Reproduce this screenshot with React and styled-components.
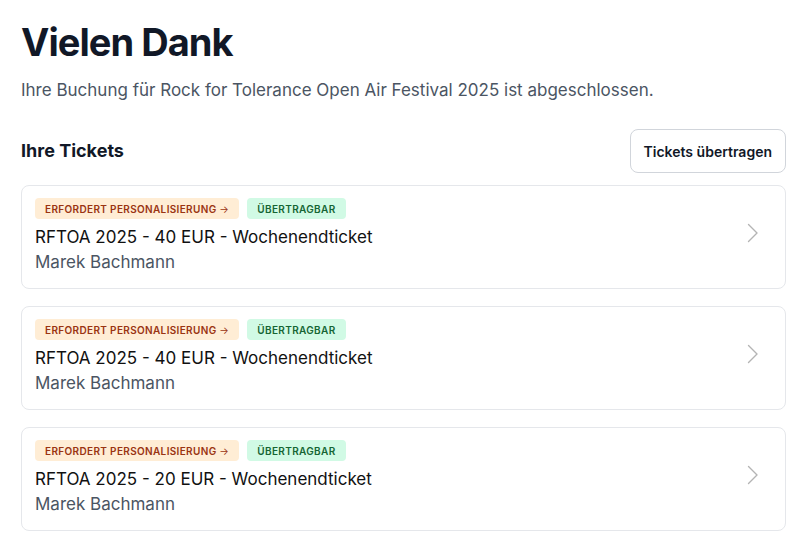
import React from "react";
import styled, { createGlobalStyle } from "styled-components";

const Global = createGlobalStyle`
  html, body { margin: 0; padding: 0; background: #ffffff; }
  body { font-family: Inter, "Noto Sans", sans-serif; -webkit-font-smoothing: antialiased; }
  * { box-sizing: border-box; }
`;

const Page = styled.main`
  padding: 19px 11px 20px 21px;
  display: flex;
  flex-direction: column;
`;

const Title = styled.h1`
  margin: 0;
  font-size: 38px;
  line-height: 46px;
  font-weight: 700;
  color: #111827;
  letter-spacing: -0.025em;
`;

const Subtitle = styled.p`
  margin: 13px 0 0;
  font-size: 17px;
  line-height: 25px;
  color: #4b5563;
`;

const SectionHeader = styled.div`
  margin-top: 26px;
  display: flex;
  align-items: center;
  justify-content: space-between;
`;

const SectionTitle = styled.h2`
  margin: 0;
  font-size: 18px;
  line-height: 28px;
  font-weight: 700;
  color: #111827;
`;

const OutlineButton = styled.button`
  font-family: inherit;
  font-size: 14px;
  font-weight: 600;
  color: #111827;
  background: #ffffff;
  border: 1px solid #d1d5db;
  border-radius: 8px;
  height: 44px;
  padding: 0 13px;
  cursor: pointer;
`;

const List = styled.div`
  margin-top: 12px;
  display: flex;
  flex-direction: column;
  gap: 17px;
`;

const Card = styled.div`
  display: flex;
  align-items: center;
  justify-content: space-between;
  border: 1px solid #e5e7eb;
  border-radius: 8px;
  padding: 12px 26px 12px 13px;
  height: 104px;
`;

const CardBody = styled.div`
  display: flex;
  flex-direction: column;
  align-self: flex-start;
`;

const Badges = styled.div`
  display: flex;
  gap: 8px;
`;

const Badge = styled.span`
  display: inline-flex;
  align-items: center;
  white-space: pre;
  height: 21px;
  padding: 0 10px;
  border-radius: 4px;
  font-size: 10px;
  line-height: 14px;
  font-weight: 600;
  letter-spacing: 0.35px;
  text-transform: uppercase;
  background: ${(p) => (p.$tone === "warn" ? "#ffedd5" : "#d1fae5")};
  color: ${(p) => (p.$tone === "warn" ? "#9a3412" : "#166534")};
`;

const Arrow = styled.span`
  font-weight: 400;
`;

const TicketName = styled.div`
  margin-top: 6px;
  font-size: 17px;
  line-height: 25px;
  color: #111111;
`;

const Holder = styled.div`
  font-size: 17px;
  line-height: 25px;
  color: #4b5563;
`;

const ChevronWrap = styled.span`
  display: flex;
  margin-bottom: 9px;
`;

const Chevron = () => (
  <ChevronWrap>
    <svg width="12" height="20" viewBox="0 0 12 20" fill="none">
      <path d="M1.5 1.5 L10 10 L1.5 18.5" stroke="#b4b4b4" strokeWidth="1.4" strokeLinecap="round" strokeLinejoin="round" />
    </svg>
  </ChevronWrap>
);

const tickets = [
  { name: "RFTOA 2025 - 40 EUR - Wochenendticket", holder: "Marek Bachmann" },
  { name: "RFTOA 2025 - 40 EUR - Wochenendticket", holder: "Marek Bachmann" },
  { name: "RFTOA 2025 - 20 EUR - Wochenendticket", holder: "Marek Bachmann" },
];

export default function App() {
  return (
    <>
      <Global />
      <Page>
        <Title>Vielen Dank</Title>
        <Subtitle>Ihre Buchung für Rock for Tolerance Open Air Festival 2025 ist abgeschlossen.</Subtitle>
        <SectionHeader>
          <SectionTitle>Ihre Tickets</SectionTitle>
          <OutlineButton>Tickets übertragen</OutlineButton>
        </SectionHeader>
        <List>
          {tickets.map((t, i) => (
            <Card key={i}>
              <CardBody>
                <Badges>
                  <Badge $tone="warn">Erfordert Personalisierung <Arrow>→</Arrow></Badge>
                  <Badge $tone="ok">Übertragbar</Badge>
                </Badges>
                <TicketName>{t.name}</TicketName>
                <Holder>{t.holder}</Holder>
              </CardBody>
              <Chevron />
            </Card>
          ))}
        </List>
      </Page>
    </>
  );
}
